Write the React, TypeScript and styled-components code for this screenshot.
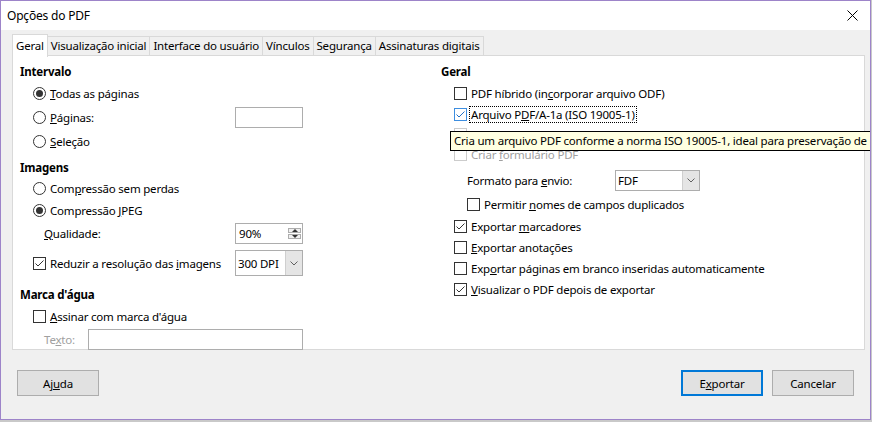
import React from 'react';
import styled, { createGlobalStyle } from 'styled-components';

const GlobalStyle = createGlobalStyle`
  html, body {
    margin: 0;
    padding: 0;
  }
  body {
    background: #c9c9c9;
    font-family: "Noto Sans", "Open Sans", sans-serif;
    font-size: 11.5px;
    letter-spacing: -0.2px;
    color: #000;
  }
`;

const Window = styled.div`
  position: relative;
  width: 869px;
  height: 418px;
  border: 1px solid #9d84c9;
  background: #f0f0f0;
  display: flex;
  flex-direction: column;
  overflow: hidden;
`;

const TitleBar = styled.div`
  height: 29px;
  background: #fff;
  display: flex;
  align-items: center;
  justify-content: space-between;
  padding: 0 12px 0 6px;
  flex-shrink: 0;
`;

const Title = styled.span`
  font-size: 12px;
`;

const TabBar = styled.div`
  display: flex;
  align-items: flex-end;
  height: 22px;
  margin: 4px 0 0 11px;
  position: relative;
  z-index: 1;
`;

const Tab = styled.div<{ $active?: boolean }>`
  height: ${(p) => (p.$active ? '22px' : '18px')};
  line-height: ${(p) => (p.$active ? '21px' : '18px')};
  padding: 0 3px;
  border: 1px solid #d9d9d9;
  border-bottom: ${(p) => (p.$active ? 'none' : '1px solid #d9d9d9')};
  margin-left: -1px;
  margin-bottom: ${(p) => (p.$active ? '-1px' : '0')};
  background: ${(p) => (p.$active ? '#fff' : '#f0f0f0')};
  white-space: nowrap;
  &:first-child {
    margin-left: 0;
  }
`;

const Panel = styled.div`
  margin: -1px 5px 0 11px;
  height: 287px;
  border: 1px solid #d9d9d9;
  background: #fff;
  display: grid;
  grid-template-columns: 421px 1fr;
  padding: 6px 0 0 7px;
`;

const Column = styled.div`
  display: flex;
  flex-direction: column;
`;

const Heading = styled.div<{ $top?: number }>`
  height: 20px;
  line-height: 20px;
  font-weight: bold;
  margin-top: ${(p) => p.$top ?? 0}px;
`;

const Row = styled.div<{ $h?: number; $indent?: number; $top?: number; $width?: number }>`
  display: flex;
  align-items: center;
  height: ${(p) => p.$h ?? 21}px;
  padding-left: ${(p) => p.$indent ?? 13}px;
  margin-top: ${(p) => p.$top ?? 0}px;
  width: ${(p) => (p.$width ? `${p.$width}px` : 'auto')};
  box-sizing: border-box;
  white-space: nowrap;
`;

const Label = styled.span<{ $disabled?: boolean; $focus?: boolean; $width?: number }>`
  color: ${(p) => (p.$disabled ? '#a0a0a0' : '#000')};
  outline: ${(p) => (p.$focus ? '1px dotted #000' : 'none')};
  padding: ${(p) => (p.$focus ? '0 1px' : '0')};
  margin-left: ${(p) => (p.$focus ? '-1px' : '0')};
  line-height: 15px;
  width: ${(p) => (p.$width ? `${p.$width}px` : 'auto')};
  flex-shrink: 0;
`;

const Key = styled.span`
  text-decoration: underline;
  text-underline-offset: 1px;
`;

const Spacer = styled.div`
  flex: 1;
`;

const RadioBox = styled.span<{ $checked?: boolean }>`
  width: 11px;
  height: 11px;
  border: 1px solid #333;
  border-radius: 50%;
  margin-right: 4px;
  display: flex;
  align-items: center;
  justify-content: center;
  flex-shrink: 0;
  &::after {
    content: '';
    width: 7px;
    height: 7px;
    border-radius: 50%;
    background: ${(p) => (p.$checked ? '#333' : 'transparent')};
  }
`;

const CheckBox = styled.span<{ $tone?: 'normal' | 'hover' | 'disabled' }>`
  width: 11px;
  height: 11px;
  border: 1px solid
    ${(p) => (p.$tone === 'hover' ? '#3d8ee0' : p.$tone === 'disabled' ? '#cccccc' : '#333')};
  margin-right: 4px;
  display: flex;
  align-items: center;
  justify-content: center;
  flex-shrink: 0;
  background: #fff;
`;

const TextBox = styled.div<{ $w: number; $h?: number }>`
  width: ${(p) => p.$w}px;
  height: ${(p) => p.$h ?? 21}px;
  box-sizing: border-box;
  border: 1px solid #adadad;
  background: #fff;
  display: flex;
  align-items: center;
  padding-left: 3px;
  flex-shrink: 0;
`;

const ComboBox = styled.div<{ $w: number; $h?: number }>`
  width: ${(p) => p.$w}px;
  height: ${(p) => p.$h ?? 21}px;
  box-sizing: border-box;
  border: 1px solid #adadad;
  background: #fff;
  display: flex;
  align-items: stretch;
  flex-shrink: 0;
`;

const ComboValue = styled.span`
  flex: 1;
  display: flex;
  align-items: center;
  padding-left: 2px;
`;

const ComboButton = styled.span`
  width: 16px;
  background: #e5e5e5;
  border-left: 1px solid #cfcfcf;
  display: flex;
  align-items: center;
  justify-content: center;
`;

const SpinButtons = styled.span`
  display: flex;
  flex-direction: column;
  width: 13px;
  margin: 1px 1px 1px auto;
  gap: 1px;
`;

const SpinHalf = styled.span<{ $down?: boolean }>`
  flex: 1;
  border: 1px solid #adadad;
  background: #f0f0f0;
  display: flex;
  align-items: center;
  justify-content: center;
  &::after {
    content: '';
    border-left: 3px solid transparent;
    border-right: 3px solid transparent;
    ${(p) => (p.$down ? 'border-top: 3px solid #333;' : 'border-bottom: 3px solid #333;')}
  }
`;

const Tooltip = styled.div`
  position: absolute;
  left: 449px;
  top: 130px;
  height: 18px;
  line-height: 18px;
  padding: 0 3px;
  border: 1px solid #000;
  background: #ffffe1;
  white-space: nowrap;
  z-index: 5;
`;

const Footer = styled.div`
  display: flex;
  align-items: center;
  padding: 20px 16px 0 16px;
  gap: 9px;
`;

const Button = styled.button<{ $default?: boolean }>`
  width: 82px;
  height: 26px;
  box-sizing: border-box;
  font-family: inherit;
  font-size: 11.5px;
  letter-spacing: -0.2px;
  color: #000;
  background: #e1e1e1;
  border: ${(p) => (p.$default ? '2px solid #0078d7' : '1px solid #adadad')};
  padding: 0;
`;

const Check = ({ color = '#333' }: { color?: string }) => (
  <svg width="11" height="11" viewBox="0 0 11 11">
    <polyline points="1.5,5.5 4,8 9.5,2.5" fill="none" stroke={color} strokeWidth="1" />
  </svg>
);

const Chevron = () => (
  <svg width="8" height="5" viewBox="0 0 8 5">
    <polyline points="0.5,0.5 4,4 7.5,0.5" fill="none" stroke="#606060" strokeWidth="1" />
  </svg>
);

const CloseIcon = () => (
  <svg width="11" height="11" viewBox="0 0 11 11">
    <path d="M0.5 0.5 L10.5 10.5 M10.5 0.5 L0.5 10.5" stroke="#000" strokeWidth="1" />
  </svg>
);

const tabs = [
  'Geral',
  'Visualização inicial',
  'Interface do usuário',
  'Vínculos',
  'Segurança',
  'Assinaturas digitais'
];

const App: React.FC = () => {
  return (
    <>
      <GlobalStyle />
      <Window>
        <TitleBar>
          <Title>Opções do PDF</Title>
          <CloseIcon />
        </TitleBar>

        <TabBar>
          {tabs.map((t, i) => (
            <Tab key={t} $active={i === 0}>
              {t}
            </Tab>
          ))}
        </TabBar>

        <Panel>
          <Column>
            <Heading>Intervalo</Heading>
            <Row $h={22}>
              <RadioBox $checked />
              <Label>
                <Key>T</Key>odas as páginas
              </Label>
            </Row>
            <Row $h={26} $width={283}>
              <RadioBox />
              <Label>
                <Key>P</Key>áginas:
              </Label>
              <Spacer />
              <TextBox $w={68} />
            </Row>
            <Row $h={22}>
              <RadioBox />
              <Label>
                <Key>S</Key>eleção
              </Label>
            </Row>

            <Heading $top={6}>Imagens</Heading>
            <Row $h={20}>
              <RadioBox />
              <Label>
                Com<Key>p</Key>ressão sem perdas
              </Label>
            </Row>
            <Row $h={24}>
              <RadioBox $checked />
              <Label>
                Compressão <Key>J</Key>PEG
              </Label>
            </Row>
            <Row $h={22} $indent={24} $width={283}>
              <Label>
                <Key>Q</Key>ualidade:
              </Label>
              <Spacer />
              <TextBox $w={68}>
                90%
                <SpinButtons>
                  <SpinHalf />
                  <SpinHalf $down />
                </SpinButtons>
              </TextBox>
            </Row>
            <Row $h={26} $top={6} $width={283}>
              <CheckBox>
                <Check />
              </CheckBox>
              <Label>
                Reduzir a resolução das <Key>i</Key>magens
              </Label>
              <Spacer />
              <ComboBox $w={68} $h={26}>
                <ComboValue>300 DPI</ComboValue>
                <ComboButton>
                  <Chevron />
                </ComboButton>
              </ComboBox>
            </Row>

            <Heading $top={9}>Marca d'água</Heading>
            <Row $h={22}>
              <CheckBox />
              <Label>
                <Key>A</Key>ssinar com marca d'água
              </Label>
            </Row>
            <Row $h={24} $indent={24} $width={283}>
              <Label $disabled $width={44}>
                Te<Key>x</Key>to:
              </Label>
              <TextBox $w={215} />
            </Row>
          </Column>

          <Column>
            <Heading>Geral</Heading>
            <Row $h={22}>
              <CheckBox />
              <Label>
                PDF híbrido (in<Key>c</Key>orporar arquivo ODF)
              </Label>
            </Row>
            <Row $h={20}>
              <CheckBox $tone="hover">
                <Check color="#1f6fc5" />
              </CheckBox>
              <Label $focus>
                Arquivo P<Key>D</Key>F/A-1a (ISO 19005-1)
              </Label>
            </Row>
            <Row $h={19} $top={1}>
              <CheckBox $tone="disabled" />
            </Row>
            <Row $h={21}>
              <CheckBox $tone="disabled" />
              <Label $disabled>
                Criar <Key>f</Key>ormulário PDF
              </Label>
            </Row>
            <Row $h={26} $top={2} $indent={26}>
              <Label $width={148}>
                Formato para <Key>e</Key>nvio:
              </Label>
              <ComboBox $w={85}>
                <ComboValue>FDF</ComboValue>
                <ComboButton>
                  <Chevron />
                </ComboButton>
              </ComboBox>
            </Row>
            <Row $h={22} $indent={26}>
              <CheckBox />
              <Label>
                Permitir <Key>n</Key>omes de campos duplicados
              </Label>
            </Row>
            <Row $h={22}>
              <CheckBox>
                <Check />
              </CheckBox>
              <Label>
                Exportar <Key>m</Key>arcadores
              </Label>
            </Row>
            <Row $h={20}>
              <CheckBox />
              <Label>
                <Key>E</Key>xportar anotações
              </Label>
            </Row>
            <Row $h={22}>
              <CheckBox />
              <Label>
                Exp<Key>o</Key>rtar páginas em branco inseridas automaticamente
              </Label>
            </Row>
            <Row $h={20}>
              <CheckBox>
                <Check />
              </CheckBox>
              <Label>
                <Key>V</Key>isualizar o PDF depois de exportar
              </Label>
            </Row>
          </Column>
        </Panel>

        <Footer>
          <Button>
            Aj<Key>u</Key>da
          </Button>
          <Spacer />
          <Button $default>
            E<Key>x</Key>portar
          </Button>
          <Button>Cancelar</Button>
        </Footer>

        <Tooltip>
          Cria um arquivo PDF conforme a norma ISO 19005-1, ideal para preservação de documentos a longo prazo.
        </Tooltip>
      </Window>
    </>
  );
};

export default App;
